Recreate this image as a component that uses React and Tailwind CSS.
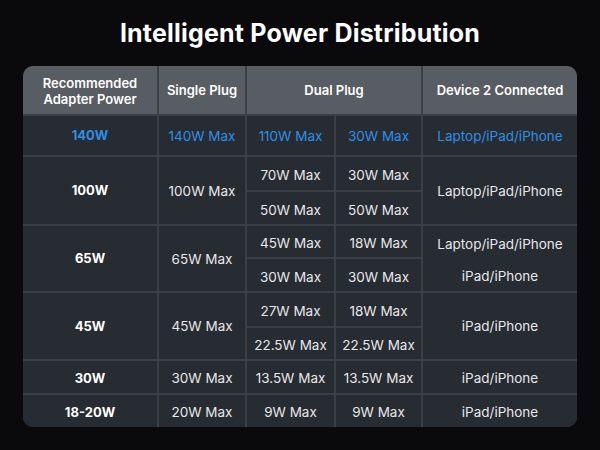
const cell = 'flex items-center justify-center text-center bg-[#272b32] pt-[3px]'
const sub = 'flex items-center justify-center text-center bg-[#272b32] pt-[4px]'
const span = 'row-span-2 flex items-center justify-center text-center bg-[#272b32] pt-[1px]'
const top = 'flex items-center justify-center text-center bg-[#272b32] pt-[1px] text-[#2d8fe6]'

export default function App() {
  return (
    <div
      className="w-[600px] h-[450px] bg-[#0a0a0c] flex flex-col items-center text-white"
      style={{ fontFamily: 'Inter, "Noto Sans", sans-serif' }}
    >
      <h1 className="mt-[17px] text-[25px] leading-[32px] font-bold tracking-[0.2px]">
        Intelligent Power Distribution
      </h1>

      <div className="mt-[17px] w-[554px] rounded-[10px] overflow-hidden bg-[#3b3f46] grid gap-[2px] grid-cols-[134px_86px_87px_85px_154px] grid-rows-[48px_39px_33px_32px_31px_32px_33px_31px_32px_32px] text-[13.5px] text-[#e6e7e9]">
        {/* Header */}
        <div className="flex items-center justify-center text-center bg-[#585c63] font-semibold text-white text-[13px] leading-[16px] pt-[1px]">
          Recommended
          <br />
          Adapter Power
        </div>
        <div className="flex items-center justify-center bg-[#585c63] font-semibold text-white text-[13px] pt-[2px]">Single Plug</div>
        <div className="col-span-2 flex items-center justify-center bg-[#585c63] font-semibold text-white text-[13px] pt-[2px]">Dual Plug</div>
        <div className="flex items-center justify-center bg-[#585c63] font-semibold text-white text-[13px] pt-[2px]">Device 2 Connected</div>

        {/* 140W */}
        <div className={`${top} font-bold text-[13px]`}>140W</div>
        <div className={top}>140W Max</div>
        <div className={top}>110W Max</div>
        <div className={top}>30W Max</div>
        <div className={top}>Laptop/iPad/iPhone</div>

        {/* 100W */}
        <div className={`${span} font-bold text-[13px] text-white`}>100W</div>
        <div className={span}>100W Max</div>
        <div className={sub}>70W Max</div>
        <div className={sub}>30W Max</div>
        <div className={span}>Laptop/iPad/iPhone</div>
        <div className={sub}>50W Max</div>
        <div className={sub}>50W Max</div>

        {/* 65W */}
        <div className={`${span} font-bold text-[13px] text-white`}>65W</div>
        <div className={span}>65W Max</div>
        <div className={sub}>45W Max</div>
        <div className={sub}>18W Max</div>
        <div className="row-span-2 grid grid-rows-2 bg-[#272b32] text-center">
          <div className="flex items-center justify-center pt-[4px]">Laptop/iPad/iPhone</div>
          <div className="flex items-center justify-center pt-[3px]">iPad/iPhone</div>
        </div>
        <div className={sub}>30W Max</div>
        <div className={sub}>30W Max</div>

        {/* 45W */}
        <div className={`${span} font-bold text-[13px] text-white`}>45W</div>
        <div className={span}>45W Max</div>
        <div className={sub}>27W Max</div>
        <div className={sub}>18W Max</div>
        <div className={span}>iPad/iPhone</div>
        <div className={sub}>22.5W Max</div>
        <div className={sub}>22.5W Max</div>

        {/* 30W */}
        <div className={`${cell} font-bold text-[13px] text-white`}>30W</div>
        <div className={cell}>30W Max</div>
        <div className={cell}>13.5W Max</div>
        <div className={cell}>13.5W Max</div>
        <div className={cell}>iPad/iPhone</div>

        {/* 18-20W */}
        <div className={`${cell} font-bold text-[13px] text-white`}>18-20W</div>
        <div className={cell}>20W Max</div>
        <div className={cell}>9W Max</div>
        <div className={cell}>9W Max</div>
        <div className={cell}>iPad/iPhone</div>
      </div>
    </div>
  )
}
